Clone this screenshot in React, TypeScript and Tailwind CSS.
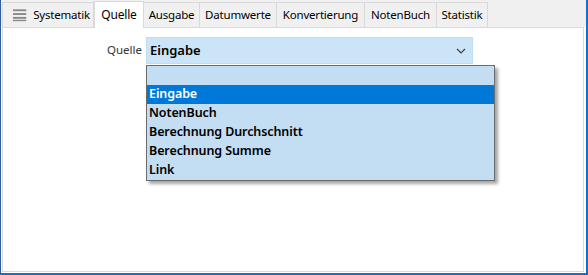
import React from 'react';

const tabs: [string, string][] = [
  ['Ausgabe', 'w-[56px]'],
  ['Datumwerte', 'w-[77px]'],
  ['Konvertierung', 'w-[88px]'],
  ['NotenBuch', 'w-[72px]'],
  ['Statistik', 'w-[51px]'],
];
const options = ['', 'Eingabe', 'NotenBuch', 'Berechnung Durchschnitt', 'Berechnung Summe', 'Link'];

const App: React.FC = () => {
  return (
    <div
      className="w-[588px] h-[275px] bg-white border-l border-r-2 border-b-2 border-l-[#2b5d9a] border-r-[#1a6fc4] border-b-[#1a6fc4] flex flex-col overflow-hidden"
      style={{ fontFamily: '"Noto Sans", "Open Sans", sans-serif' }}
    >
      {/* tab bar */}
      <div className="h-[27px] flex items-end bg-[#f0f0f0] pl-[1px] pr-[1px] text-[11.5px] tracking-[-0.2px] text-black">
        <div className="h-[25px] flex items-center border border-b-0 border-[#d9d9d9] bg-[#f0f0f0] pl-[9px] pr-[3px] w-[92px]">
          <svg width="16" height="14" viewBox="0 0 16 14" className="mr-[6px]">
            <rect x="1" y="1" width="14" height="2" fill="#8a8a8a" />
            <rect x="1" y="5" width="14" height="2" fill="#8a8a8a" />
            <rect x="1" y="9" width="14" height="2" fill="#8a8a8a" />
            <rect x="1" y="12" width="14" height="1.5" fill="#8a8a8a" />
          </svg>
          <span>Systematik</span>
        </div>
        <div className="h-[27px] w-[50px] justify-center flex items-center bg-white border border-b-0 border-[#d9d9d9] -mb-[1px] relative z-10 text-[12px]">
          Quelle
        </div>
        {tabs.map(([t, w]) => (
          <div
            key={t}
            className={'h-[25px] flex items-center justify-center border border-b-0 border-l-0 border-[#d9d9d9] bg-[#f0f0f0] ' + w}
          >
            {t}
          </div>
        ))}
        <div className="flex-1" />
      </div>

      {/* panel */}
      <div className="flex-1 mx-[1px] mr-[2px] mb-[1px] border border-[#d9d9d9] bg-white relative">
        <div className="flex items-start pt-[9px]">
          <div className="w-[143px] text-right pr-[4px] pt-[4px] text-[11.5px] text-[#333]">Quelle</div>
          <div className="w-[327px] h-[27px] bg-[#cce4f7] border border-[#c4dcf0] flex items-center pl-[3px] pr-[6px]">
            <span className="flex-1 text-[13px] font-semibold text-black">Eingabe</span>
            <svg width="10" height="6" viewBox="0 0 10 6">
              <path d="M1 1 L5 5 L9 1" fill="none" stroke="#404040" strokeWidth="1.2" />
            </svg>
          </div>
        </div>

        {/* open list */}
        <div className="absolute left-[143px] top-[37px] w-[349px] bg-[#c3ddf3] border border-[#6b6b6b] shadow-[3px_3px_3px_rgba(0,0,0,0.35)]">
          {options.map((o, i) => (
            <div
              key={i}
              className={
                'h-[19px] pl-[2px] flex items-center text-[12.5px] font-semibold tracking-[-0.1px] ' +
                (o === 'Eingabe' ? 'bg-[#0078d7] text-white' : 'text-black')
              }
            >
              {o}
            </div>
          ))}
        </div>
      </div>
    </div>
  );
};

export default App;
